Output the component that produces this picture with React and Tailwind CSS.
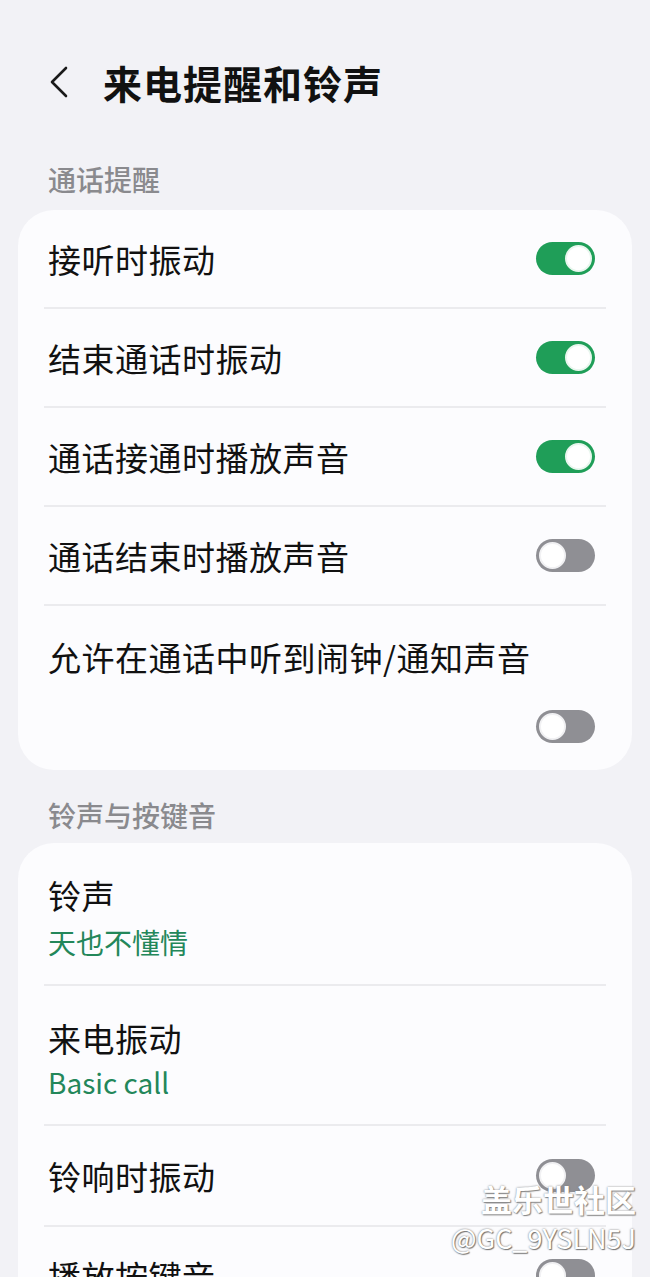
import React from 'react';

const Toggle = ({ on }) => {
  return (
    <div
      className={`w-[59px] h-[33px] rounded-full flex items-center px-[3px] ${
        on ? 'bg-[#1f9e58] justify-end' : 'bg-[#8f8f94] justify-start'
      }`}
    >
      <div
        className={`w-[27px] h-[27px] rounded-full bg-white border-[2px] ${
          on ? 'border-[#e9f6ee]' : 'border-[#f1f1f3]'
        }`}
      />
    </div>
  );
};

const Divider = () => <div className="mx-[26px] h-[2px] bg-[#ebebee]" />;

const SwitchRow = ({ label, on, className = 'h-[97px]' }) => (
  <div className={`flex items-center justify-between pl-[30px] pr-[37px] ${className}`}>
    <span className="text-[33px] leading-[40px] tracking-[0.5px] text-[#111111]">{label}</span>
    <Toggle on={on} />
  </div>
);

const ValueRow = ({ label, value, className, gap = 'mt-[9px]' }) => (
  <div className={`pl-[30px] pr-[37px] flex flex-col ${className}`}>
    <span className="text-[33px] leading-[40px] tracking-[0.5px] text-[#111111]">{label}</span>
    <span className={`text-[28px] leading-[36px] text-[#23875a] ${gap}`}>{value}</span>
  </div>
);

const SectionTitle = ({ children, className }) => (
  <div className={`pl-[48px] text-[28px] leading-[36px] font-medium text-[#8a8a8e] ${className}`}>
    {children}
  </div>
);

export default function App() {
  return (
    <div
      className="relative w-[650px] h-[1277px] overflow-hidden bg-[#f2f2f6]"
      style={{ fontFamily: '"Noto Sans CJK SC", "Noto Sans", sans-serif' }}
    >
      {/* Header */}
      <div className="h-[52px] mt-[56px] flex items-center">
        <svg width="20" height="32" viewBox="0 0 20 32" className="ml-[49px]" fill="none">
          <path d="M17 2 L3 16 L17 30" stroke="#1a1a1a" strokeWidth="2.6" strokeLinecap="round" strokeLinejoin="round" />
        </svg>
        <h1 className="ml-[34px] text-[39px] leading-[48px] font-bold text-[#111111] tracking-[1px]">
          来电提醒和铃声
        </h1>
      </div>

      {/* Call alerts */}
      <SectionTitle className="mt-[53px]">通话提醒</SectionTitle>
      <div className="mt-[13px] mx-[18px] bg-[#fcfcfe] rounded-[36px]">
        <SwitchRow label="接听时振动" on />
        <Divider />
        <SwitchRow label="结束通话时振动" on />
        <Divider />
        <SwitchRow label="通话接通时播放声音" on />
        <Divider />
        <SwitchRow label="通话结束时播放声音" on={false} />
        <Divider />
        <div className="pl-[30px] pr-[37px] pt-[31px] pb-[27px] flex flex-col">
          <span className="text-[33px] leading-[40px] tracking-[0.5px] text-[#111111]">允许在通话中听到闹钟/通知声音</span>
          <div className="mt-[33px] flex justify-end">
            <Toggle on={false} />
          </div>
        </div>
      </div>

      {/* Ringtones */}
      <SectionTitle className="mt-[27px]">铃声与按键音</SectionTitle>
      <div className="mt-[10px] mx-[18px] bg-[#fcfcfe] rounded-[36px]">
        <ValueRow label="铃声" value="天也不懂情" className="pt-[32px] pb-[24px]" />
        <Divider />
        <ValueRow label="来电振动" value="Basic call" gap="mt-[6px]" className="pt-[32px] pb-[24px]" />
        <Divider />
        <SwitchRow label="铃响时振动" on={false} className="h-[99px]" />
        <Divider />
        <SwitchRow label="播放按键音" on={false} />
      </div>

      {/* Watermark */}
      <div className="absolute right-[14px] bottom-[22px] flex flex-col items-end">
        <span className="text-[31px] leading-[40px] font-bold text-white [text-shadow:0_0_2px_#7a7a7a,1px_1px_1px_#8a8a8a]">
          盖乐世社区
        </span>
        <span className="mt-[2px] text-[27px] leading-[34px] text-white [text-shadow:0_0_2px_#6a6a6a,1px_1px_1px_#7a7a7a]">
          @GC_9YSLN5J
        </span>
      </div>
    </div>
  );
}
